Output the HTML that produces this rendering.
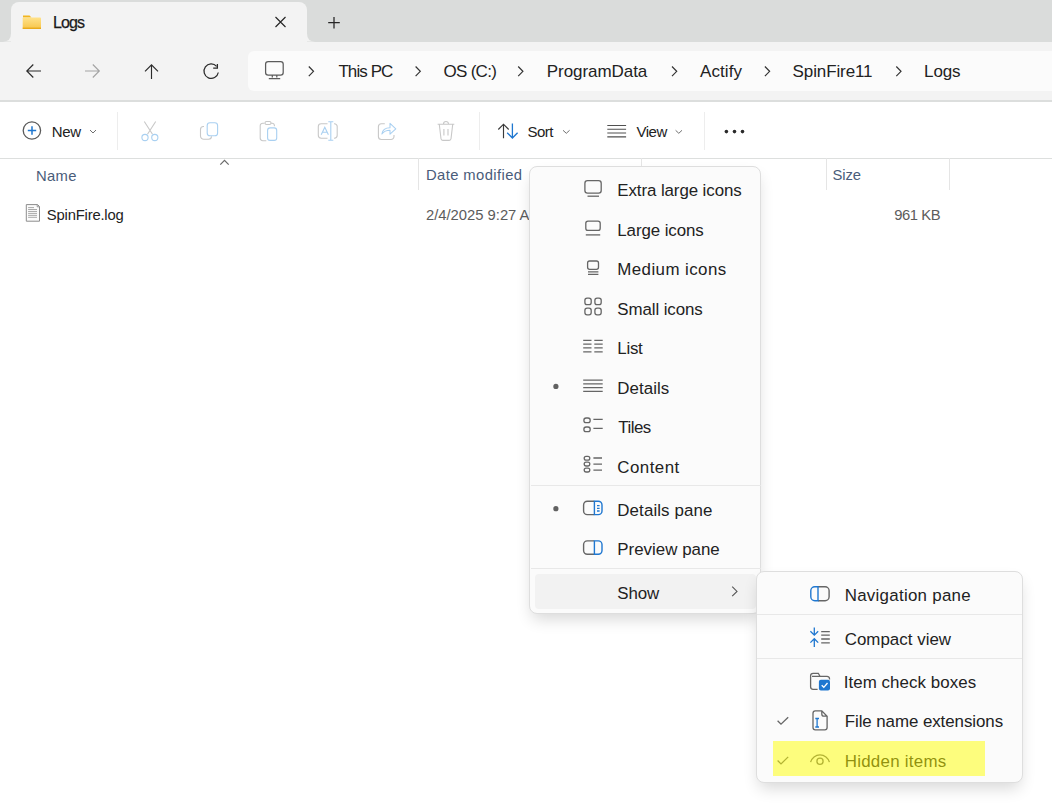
<!DOCTYPE html>
<html><head><meta charset="utf-8"><style>
html,body{margin:0;padding:0;width:1052px;height:811px;overflow:hidden;background:#ffffff;}
body{position:relative;font-family:"Liberation Sans",sans-serif;}
.t{position:absolute;white-space:nowrap;-webkit-text-stroke:0px currentColor;}
.a{position:absolute;}
svg{position:absolute;overflow:visible;}
</style></head><body>
<!-- tab strip -->
<div class="a" style="left:0;top:0;width:1052px;height:41.6px;background:#dadcdb;"></div>
<div class="a" style="left:11px;top:2px;width:296px;height:40px;background:#f3f3f3;border-radius:8px 8px 0 0;"></div>
<!-- inverted corners -->
<svg style="left:0;top:33px" width="320" height="10"><path d="M3,8.6 Q11,8.6 11,0.6 L11,8.6 Z" fill="#f3f3f3"/><path d="M307,0.6 Q307,8.6 315,8.6 L307,8.6 Z" fill="#f3f3f3"/></svg>
<!-- nav row -->
<div class="a" style="left:0;top:41.6px;width:1052px;height:58.4px;background:#f3f3f3;"></div>
<div class="a" style="left:247.5px;top:51px;width:820px;height:39.5px;background:#fbfbfb;border-radius:6px;"></div>
<div class="a" style="left:0;top:100px;width:1052px;height:2px;background:#dcdedd;"></div>
<!-- toolbar line -->
<div class="a" style="left:0;top:157.5px;width:1052px;height:1.2px;background:#dddfde;"></div>
<div class="a" style="left:117.4px;top:111.5px;width:1px;height:38.5px;background:#ededed;"></div>
<div class="a" style="left:479px;top:111.5px;width:1px;height:38.5px;background:#ededed;"></div>
<div class="a" style="left:703.5px;top:111.5px;width:1px;height:38.5px;background:#ededed;"></div>
<!-- column dividers -->
<div class="a" style="left:418px;top:158px;width:1px;height:32px;background:#e5e5e5;"></div>
<div class="a" style="left:640.5px;top:158px;width:1px;height:32px;background:#e5e5e5;"></div>
<div class="a" style="left:826px;top:158px;width:1px;height:32px;background:#e5e5e5;"></div>
<div class="a" style="left:949px;top:158px;width:1px;height:32px;background:#e5e5e5;"></div>

<!-- tab contents -->
<svg style="left:0;top:0" width="1052" height="160">
 <defs><linearGradient id="fg" x1="0" y1="0" x2="0" y2="1"><stop offset="0" stop-color="#ffe28a"/><stop offset="1" stop-color="#f7c54a"/></linearGradient></defs>
 <path d="M23,15.5 h6.5 l2,2 h-8.5 z" fill="#f2b51f"/>
 <rect x="22.7" y="17.5" width="18.3" height="11.5" rx="0.8" fill="url(#fg)"/>
 <rect x="22.7" y="27.6" width="18.3" height="1.4" fill="#e9aa1b"/>
 <path d="M275.5,17 L285.5,27 M285.5,17 L275.5,27" stroke="#262626" stroke-width="1.15" fill="none"/>
 <path d="M334,17 V28.5 M328.2,22.7 H339.8" stroke="#262626" stroke-width="1.25" fill="none"/>
 <!-- nav arrows -->
 <path d="M26.8,71 H41 M33.3,64.5 L26.8,71 L33.3,77.5" stroke="#2b2b2b" stroke-width="1.15" fill="none"/>
 <path d="M85,71 H99.3 M92.8,64.5 L99.3,71 L92.8,77.5" stroke="#a3a3a3" stroke-width="1.15" fill="none"/>
 <path d="M151.5,64.8 V79 M145,71.3 L151.5,64.8 L158,71.3" stroke="#2b2b2b" stroke-width="1.15" fill="none"/>
 <path d="M218.3,72.5 A7.2,7.2 0 1 1 216.6,66.4" stroke="#2b2b2b" stroke-width="1.25" fill="none"/>
 <path d="M213.2,68.1 H217.4 V63.9" stroke="#2b2b2b" stroke-width="1.25" fill="none"/>
 <!-- monitor -->
 <rect x="265.6" y="61.5" width="17.6" height="13.6" rx="2.6" stroke="#5b5b5b" stroke-width="1.25" fill="none"/>
 <path d="M272.3,75 V77.5 M276.8,75 V77.5 M268.8,78.7 H280.2" stroke="#5b5b5b" stroke-width="1.25" fill="none"/>
 <!-- chevrons -->
 <g stroke="#333" stroke-width="1.2" fill="none">
 <path d="M308.8,66.5 L313.5,71.3 L308.8,76.1"/>
 <path d="M415.6,66.5 L420.3,71.3 L415.6,76.1"/>
 <path d="M518.2,66.5 L522.9,71.3 L518.2,76.1"/>
 <path d="M672,66.5 L676.7,71.3 L672,76.1"/>
 <path d="M764.9,66.5 L769.6,71.3 L764.9,76.1"/>
 <path d="M896.3,66.5 L901,71.3 L896.3,76.1"/>
 </g>
 <!-- toolbar -->
 <circle cx="31.9" cy="130.5" r="8.7" stroke="#5a5a5a" stroke-width="1.3" fill="none"/>
 <path d="M32,126.3 V134.7 M27.8,130.5 H36.2" stroke="#1f77d0" stroke-width="1.5" fill="none"/>
 <path d="M90,130 L93,133 L96,130" stroke="#707070" stroke-width="1" fill="none"/>
 <!-- scissors -->
 <path d="M144.3,121.5 L152.5,134.3 M155.7,121.5 L147.5,134.3" stroke="#c8c8c8" stroke-width="1.1" fill="none"/>
 <circle cx="145" cy="137.5" r="3.1" stroke="#a9d0f1" stroke-width="1.1" fill="none"/>
 <circle cx="154.8" cy="137.5" r="3.1" stroke="#a9d0f1" stroke-width="1.1" fill="none"/>
 <!-- copy -->
 <path d="M204,126.5 h-0.5 a3,3 0 0 0 -3,3 v6.5 a3.3,3.3 0 0 0 3.3,3.3 h4.7 a3,3 0 0 0 3,-3" stroke="#c8c8c8" stroke-width="1.1" fill="none"/>
 <rect x="207.2" y="122.8" width="10.4" height="13" rx="2.8" stroke="#a9d0f1" stroke-width="1.1" fill="none"/>
 <!-- paste -->
 <path d="M264.5,123.2 h-1.7 a2.6,2.6 0 0 0 -2.6,2.6 v12.3 a2.6,2.6 0 0 0 2.6,2.6 h3.5 M271,123.2 h1.2 a2.2,2.2 0 0 1 2.2,2.2 v0.8" stroke="#c8c8c8" stroke-width="1.1" fill="none"/>
 <rect x="265" y="121.5" width="6" height="3" rx="1.4" stroke="#c8c8c8" stroke-width="1.1" fill="none"/>
 <rect x="267.6" y="127.9" width="9.1" height="12.5" rx="2.5" stroke="#a9d0f1" stroke-width="1.1" fill="none"/>
 <!-- rename -->
 <path d="M327.5,123.7 h-6.3 a2.9,2.9 0 0 0 -2.9,2.9 v8.7 a2.9,2.9 0 0 0 2.9,2.9 h6.3 M334,123.7 h0.3 a2.9,2.9 0 0 1 2.9,2.9 v8.7 a2.9,2.9 0 0 1 -2.9,2.9 h-0.3" stroke="#c8c8c8" stroke-width="1.1" fill="none"/>
 <path d="M321.2,134.8 L324.8,127.2 L328.4,134.8 M322.4,132.2 H327.2 M330.8,121.8 V140.3 M328.3,121.8 H333.3 M328.3,140.3 H333.3" stroke="#a9d0f1" stroke-width="1.1" fill="none"/>
 <!-- share -->
 <path d="M384.8,123.7 h-3.4 a3,3 0 0 0 -3,3 v9.8 a3,3 0 0 0 3,3 h9.6 a3,3 0 0 0 3,-3 v-1.6" stroke="#c8c8c8" stroke-width="1.1" fill="none"/>
 <path d="M381.9,134 C382.5,129.5 385.5,127.7 390,127.7 V123.3 L395.8,128.8 L390,134.2 V130.3 C386.5,130.3 383.8,131.5 381.9,134 Z" stroke="#a9d0f1" stroke-width="1.05" fill="none" stroke-linejoin="round"/>
 <!-- trash -->
 <path d="M437.6,124.2 H454.3 M439.3,124.5 L441,138.8 a1.8,1.8 0 0 0 1.8,1.6 h6.4 a1.8,1.8 0 0 0 1.8,-1.6 L452.7,124.5 M443.5,124 a2.5,2.5 0 0 1 5,0 M443.9,129 V135.5 M448,129 V135.5" stroke="#c8c8c8" stroke-width="1.1" fill="none"/>
 <!-- sort icon -->
 <path d="M503.5,124 V138.3 M498.3,129.5 L503.5,124.2 L508.7,129.5" stroke="#3a3a3a" stroke-width="1.15" fill="none"/>
 <path d="M512.4,123.6 V138 M507.2,132.7 L512.4,138 L517.6,132.7" stroke="#1f77d0" stroke-width="1.3" fill="none"/>
 <path d="M563,130.3 L566.3,133.3 L569.6,130.3" stroke="#707070" stroke-width="1" fill="none"/>
 <!-- view icon -->
 <path d="M607.3,125.5 H626.1 M607.3,129.2 H626.1 M607.3,133 H626.1 M607.3,136.8 H626.1" stroke="#505050" stroke-width="1.15" fill="none"/>
 <path d="M675.6,130.3 L678.8,133.3 L682,130.3" stroke="#707070" stroke-width="1" fill="none"/>
 <!-- dots -->
 <circle cx="726.4" cy="131.6" r="1.8" fill="#2a2a2a"/>
 <circle cx="734.5" cy="131.6" r="1.8" fill="#2a2a2a"/>
 <circle cx="742.5" cy="131.6" r="1.8" fill="#2a2a2a"/>
 <!-- sort caret -->
 <path d="M220.3,164.6 L224.5,160.4 L228.7,164.6" stroke="#6a6a6a" stroke-width="1.25" fill="none"/>
</svg>
<!-- file icon -->
<svg style="left:0;top:0" width="60" height="240">
 <path d="M26.3,204.6 H37.6 L39.5,206.5 V221.2 H26.3 Z" fill="#fcfcfc" stroke="#8c8c8c" stroke-width="1"/>
 <path d="M37.2,204.8 V206.8 H39.3" fill="none" stroke="#8c8c8c" stroke-width="0.9"/>
 <path d="M28.1,207.6 H34 M28.1,209.5 H37 M28.1,211.45 H37 M28.1,213.4 H37 M28.1,215.35 H37 M28.1,217.3 H37" stroke="#9a9a9a" stroke-width="0.85"/>
</svg>

<div class="t" style="left:53.00px;top:15.46px;font-size:16px;line-height:16px;letter-spacing:-0.900px;color:#1a1a1a;-webkit-text-stroke:0.25px #1a1a1a;">Logs</div>
<div class="t" style="left:338.40px;top:63.41px;font-size:17px;line-height:17px;letter-spacing:-0.917px;color:#222222;">This PC</div>
<div class="t" style="left:443.40px;top:63.41px;font-size:17px;line-height:17px;letter-spacing:-0.683px;color:#222222;">OS (C:)</div>
<div class="t" style="left:546.80px;top:63.41px;font-size:17px;line-height:17px;letter-spacing:-0.060px;color:#222222;">ProgramData</div>
<div class="t" style="left:700.00px;top:63.41px;font-size:17px;line-height:17px;letter-spacing:0.080px;color:#222222;">Actify</div>
<div class="t" style="left:792.60px;top:63.41px;font-size:17px;line-height:17px;letter-spacing:-0.111px;color:#222222;">SpinFire11</div>
<div class="t" style="left:924.10px;top:63.41px;font-size:17px;line-height:17px;letter-spacing:-0.133px;color:#222222;">Logs</div>
<div class="t" style="left:51.80px;top:124.10px;font-size:15px;line-height:15px;letter-spacing:-0.300px;color:#222222;">New</div>
<div class="t" style="left:527.40px;top:124.40px;font-size:15px;line-height:15px;letter-spacing:-0.500px;color:#222222;">Sort</div>
<div class="t" style="left:636.40px;top:123.90px;font-size:15px;line-height:15px;letter-spacing:-0.433px;color:#222222;">View</div>
<div class="t" style="left:35.90px;top:169.27px;font-size:14.8px;line-height:14.8px;letter-spacing:0.333px;color:#4a5c7a;">Name</div>
<div class="t" style="left:426.00px;top:167.77px;font-size:14.8px;line-height:14.8px;letter-spacing:0.392px;color:#4a5c7a;">Date modified</div>
<div class="t" style="left:832.50px;top:167.97px;font-size:14.8px;line-height:14.8px;letter-spacing:-0.100px;color:#4a5c7a;">Size</div>
<div class="t" style="left:46.80px;top:207.67px;font-size:14.8px;line-height:14.8px;letter-spacing:-0.182px;color:#222222;">SpinFire.log</div>
<div class="t" style="left:426.00px;top:208.17px;font-size:14.8px;line-height:14.8px;letter-spacing:-0.014px;color:#5c5c5c;">2/4/2025 9:27 A</div>
<div class="t" style="left:894.20px;top:208.17px;font-size:14.8px;line-height:14.8px;letter-spacing:-0.420px;color:#5c5c5c;">961 KB</div>

<!-- main menu -->
<div class="a" style="left:528.8px;top:165.8px;width:229.9px;height:446px;background:#fbfbfb;border:1px solid #dedede;border-radius:8px;box-shadow:0 8px 16px -3px rgba(0,0,0,0.16);"></div>
<div class="a" style="left:530.5px;top:485px;width:230px;height:1px;background:#e8e8e8;"></div>
<div class="a" style="left:530.5px;top:568px;width:230px;height:1px;background:#e8e8e8;"></div>
<div class="a" style="left:534.8px;top:573.9px;width:221.2px;height:35.2px;background:#f2f2f2;border-radius:4px;"></div>
<svg style="left:0;top:0" width="1052" height="811">
 <g stroke="#666" stroke-width="1.3" fill="none">
  <rect x="584.9" y="180.6" width="16.3" height="12.6" rx="2.6"/>
  <path d="M587.5,196.2 H599"/>
  <rect x="585.8" y="221.1" width="14.4" height="9.3" rx="2.2"/>
  <path d="M585.8,234.9 H600.2"/>
  <rect x="587.6" y="261" width="10.9" height="8.3" rx="2"/>
  <path d="M588,271.8 H598.4 M588,274.3 H598.4"/>
  <rect x="584.9" y="298.1" width="6.3" height="6.6" rx="2.2"/>
  <rect x="594.9" y="298.1" width="6.3" height="6.6" rx="2.2"/>
  <rect x="584.9" y="308.2" width="6.3" height="6.6" rx="2.2"/>
  <rect x="594.9" y="308.2" width="6.3" height="6.6" rx="2.2"/>
  <path d="M583.2,340.4 H591.5 M583.2,344.1 H591.5 M583.2,347.9 H591.5 M583.2,351.8 H591.5 M594.3,340.4 H602.7 M594.3,344.1 H602.7 M594.3,347.9 H602.7 M594.3,351.8 H602.7"/>
  <path d="M583.2,380.1 H602.7 M583.2,383.9 H602.7 M583.2,387.6 H602.7 M583.2,391.3 H602.7"/>
  <rect x="583.9" y="418" width="6.3" height="4.7" rx="2.2"/>
  <rect x="583.9" y="427" width="6.3" height="4.7" rx="2.2"/>
  <path d="M593.4,419.4 H602.7 M593.4,428.3 H602.7"/>
  <rect x="584.2" y="456.3" width="5.6" height="3.8" rx="1.9"/>
  <rect x="584.2" y="462.2" width="5.6" height="3.8" rx="1.9"/>
  <rect x="584.2" y="468.2" width="5.6" height="3.8" rx="1.9"/>
  <path d="M593.4,458 H602 M593.4,464.1 H602 M593.4,470.2 H602"/>
  <path d="M594.3,501.2 H587.3 a3.7,3.7 0 0 0 -3.7,3.7 v6 a3.7,3.7 0 0 0 3.7,3.7 H594.3" stroke-width="1.4"/>
  <path d="M594.3,540.9 H587.3 a3.7,3.7 0 0 0 -3.7,3.7 v6 a3.7,3.7 0 0 0 3.7,3.7 H594.3" stroke-width="1.4"/>
 </g>
 <g stroke="#1f77d0" stroke-width="1.3" fill="none">
  <path d="M594.4,501.2 H598.3 a3.7,3.7 0 0 1 3.7,3.7 v6 a3.7,3.7 0 0 1 -3.7,3.7 H594.4 Z" stroke-width="1.4"/>
  <path d="M597,505.6 H599.6 M597,508.3 H599.6 M597,511 H599.6"/>
  <path d="M594.4,540.9 H598.3 a3.7,3.7 0 0 1 3.7,3.7 v6 a3.7,3.7 0 0 1 -3.7,3.7 H594.4 Z" stroke-width="1.4"/>
 </g>
 <circle cx="555.9" cy="386.4" r="2.6" fill="#616161"/>
 <circle cx="555.9" cy="508.7" r="2.6" fill="#616161"/>
 <path d="M732.2,586.6 L737,591.4 L732.2,596.2" stroke="#555" stroke-width="1.1" fill="none"/>
</svg>
<div class="t" style="left:617.30px;top:183.09px;font-size:16.9px;line-height:16.9px;letter-spacing:-0.087px;color:#222222;">Extra large icons</div>
<div class="t" style="left:617.30px;top:222.59px;font-size:16.9px;line-height:16.9px;letter-spacing:-0.090px;color:#222222;">Large icons</div>
<div class="t" style="left:617.30px;top:262.09px;font-size:16.9px;line-height:16.9px;letter-spacing:0.427px;color:#222222;">Medium icons</div>
<div class="t" style="left:617.30px;top:301.59px;font-size:16.9px;line-height:16.9px;letter-spacing:-0.090px;color:#222222;">Small icons</div>
<div class="t" style="left:617.30px;top:341.09px;font-size:16.9px;line-height:16.9px;letter-spacing:-0.267px;color:#222222;">List</div>
<div class="t" style="left:617.30px;top:380.59px;font-size:16.9px;line-height:16.9px;letter-spacing:0.050px;color:#222222;">Details</div>
<div class="t" style="left:618.30px;top:420.09px;font-size:16.9px;line-height:16.9px;letter-spacing:-0.525px;color:#222222;">Tiles</div>
<div class="t" style="left:617.30px;top:459.59px;font-size:16.9px;line-height:16.9px;letter-spacing:0.467px;color:#222222;">Content</div>
<div class="t" style="left:617.30px;top:503.19px;font-size:16.9px;line-height:16.9px;letter-spacing:0.100px;color:#222222;">Details pane</div>
<div class="t" style="left:617.30px;top:541.69px;font-size:16.9px;line-height:16.9px;letter-spacing:0.009px;color:#222222;">Preview pane</div>
<div class="t" style="left:617.30px;top:586.49px;font-size:16.9px;line-height:16.9px;letter-spacing:-0.133px;color:#222222;">Show</div>

<!-- submenu -->
<div class="a" style="left:755.9px;top:571.2px;width:265px;height:210.2px;background:#fbfbfb;border:1px solid #dedede;border-radius:8px;box-shadow:0 8px 16px -3px rgba(0,0,0,0.16);"></div>
<div class="a" style="left:757px;top:614.3px;width:265px;height:1px;background:#e8e8e8;"></div>
<div class="a" style="left:757px;top:657.8px;width:265px;height:1px;background:#e8e8e8;"></div>
<svg style="left:0;top:0" width="1052" height="811">
 <g stroke="#666" stroke-width="1.3" fill="none">
  <path d="M818,586.7 H825.1 a4,4 0 0 1 4,4 v6 a4,4 0 0 1 -4,4 H818" stroke-width="1.4"/>
  <path d="M821.2,631.6 H829.8 M821.2,635.2 H829.8 M821.2,639 H829.8 M821.2,642.8 H829.8"/>
  <path d="M820,676.3 L818.3,673.3 h-5.2 a2.5,2.5 0 0 0 -2.5,2.5 v11 a2.5,2.5 0 0 0 2.5,2.5 h4.5 M812,676.3 H827 a2.5,2.5 0 0 1 2.5,2.5 v0.8"/>
  <path d="M821.8,710.9 H815.3 a2.3,2.3 0 0 0 -2.3,2.3 v14.3 a2.3,2.3 0 0 0 2.3,2.3 h9.5 a2.3,2.3 0 0 0 2.3,-2.3 V716.2 Z M821.8,710.9 V714 a2.2,2.2 0 0 0 2.2,2.2 H827.1"/>
  <path d="M777.6,720.8 L781,724.2 L788.2,717.2"/>
 </g>
 <g stroke="#1f77d0" stroke-width="1.3" fill="none">
  <path d="M818,586.7 H814.8 a4,4 0 0 0 -4,4 v6 a4,4 0 0 0 4,4 H818 Z" stroke-width="1.4"/>
  <path d="M814.3,627.4 V635 M810.4,631.3 L814.3,635.2 L818.2,631.3 M814.3,646.9 V638.8 M810.4,642.6 L814.3,638.7 L818.2,642.6"/>
  <path d="M817.1,718.5 V727 M815.3,718.5 H819 M815.3,727 H819"/>
 </g>
 <rect x="818.9" y="679.7" width="11.1" height="10.7" rx="2" fill="#1f77d0"/>
 <path d="M821.7,685.2 L823.8,687.3 L827.5,683" stroke="#fff" stroke-width="1.3" fill="none"/>
 <circle cx="784" cy="594" r="0" fill="none"/>
</svg>
<div class="t" style="left:844.70px;top:587.99px;font-size:16.9px;line-height:16.9px;letter-spacing:0.279px;color:#222222;">Navigation pane</div>
<div class="t" style="left:844.70px;top:632.29px;font-size:16.9px;line-height:16.9px;letter-spacing:0.027px;color:#222222;">Compact view</div>
<div class="t" style="left:843.70px;top:675.19px;font-size:16.9px;line-height:16.9px;letter-spacing:0.067px;color:#222222;">Item check boxes</div>
<div class="t" style="left:844.70px;top:713.99px;font-size:16.9px;line-height:16.9px;letter-spacing:-0.063px;color:#222222;">File name extensions</div>
<div class="t" style="left:844.70px;top:753.69px;font-size:16.9px;line-height:16.9px;letter-spacing:0.264px;color:#222222;">Hidden items</div>
<!-- hidden eye & check under highlight -->
<svg style="left:0;top:0" width="1052" height="811">
 <g stroke="#666" stroke-width="1.3" fill="none">
  <path d="M777.6,760.5 L781,763.9 L788.2,756.9"/>
  <path d="M810.6,762.2 A9.7,9.7 0 0 1 829.4,762.2"/>
  <circle cx="820" cy="761.3" r="3.1"/>
 </g>
</svg>
<div class="a" style="left:773px;top:741px;width:212px;height:35px;background:rgba(255,255,0,0.5);"></div>

</body></html>
